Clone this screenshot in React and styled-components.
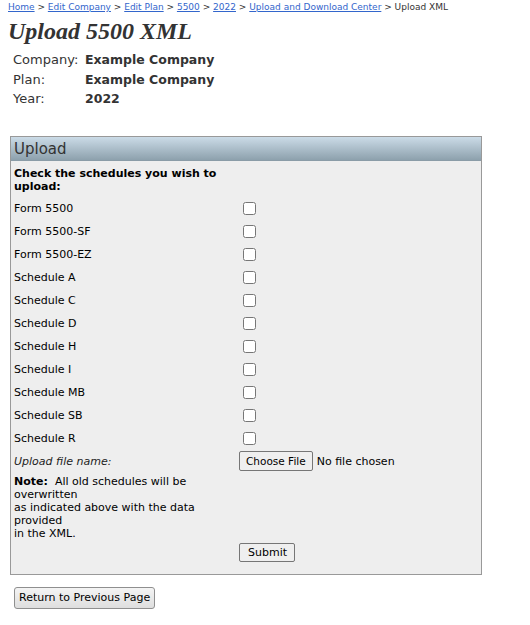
import React from "react";
import styled, { createGlobalStyle } from "styled-components";

const Global = createGlobalStyle`
  html, body { margin: 0; padding: 0; background: #fff; }
  body { font-family: "DejaVu Sans", Verdana, sans-serif; color: #000; }
`;

const Page = styled.div`
  width: 474px;
  padding: 0 0 0 8px;
`;

const Crumbs = styled.div`
  font-size: 9px;
  line-height: 14px;
  color: #333;
  white-space: nowrap;
`;

const Crumb = styled.a`
  color: #3366cc;
  text-decoration: underline;
`;

const Title = styled.h1`
  margin: 3px 0 0;
  font-family: "Liberation Serif", "Times New Roman", serif;
  font-style: italic;
  font-weight: bold;
  font-size: 24px;
  line-height: 28px;
  color: #333;
`;

const Info = styled.div`
  display: grid;
  grid-template-columns: 72px auto;
  grid-auto-rows: 19.5px;
  align-items: center;
  margin-top: 5px;
  padding-left: 5px;
  color: #333;
`;

const InfoLabel = styled.div`
  font-size: 13px;
`;

const InfoValue = styled.div`
  font-size: 12.5px;
  font-weight: bold;
`;

const Panel = styled.div`
  margin: 27px 0 0 2px;
  width: 470px;
  border: 1px solid #999;
  background: #eeeeee;
`;

const PanelHead = styled.div`
  height: 23px;
  line-height: 24px;
  padding-left: 3px;
  font-size: 15px;
  color: #333;
  background: linear-gradient(#cbdbe7, #8da1ad);
  border-bottom: 1px solid #8a9ca7;
`;

const Form = styled.div`
  display: grid;
  grid-template-columns: 222px 1fr;
  column-gap: 3px;
  padding: 6px 3px 12px;
  font-size: 11px;
`;

const Intro = styled.div`
  grid-column: 1;
  font-weight: bold;
  line-height: 13px;
  padding-bottom: 4px;
`;

const Cell = styled.div`
  height: 23px;
  display: flex;
  align-items: center;
  font-style: ${(p) => (p.$italic ? "italic" : "normal")};
  color: ${(p) => (p.$italic ? "#222" : "#000")};
`;

const Box = styled.input`
  width: 13px;
  height: 13px;
  margin: 3px 3px 3px 4px;
`;

const FileInput = styled.input`
  font-family: "DejaVu Sans", Verdana, sans-serif;
  font-size: 11px;
  color: #000;
  &::file-selector-button {
    font-family: "DejaVu Sans", Verdana, sans-serif;
    font-size: 10.5px;
    height: 20px;
    padding: 0 6px;
    margin-right: 4px;
    border: 1px solid #767676;
    border-radius: 2px;
    background: #efefef;
    color: #000;
  }
`;

const Note = styled.div`
  grid-column: 1;
  line-height: 13px;
  padding: 2px 0 3px;
`;

const SubmitCell = styled.div`
  grid-column: 2;
`;

const Button = styled.button`
  font-family: "DejaVu Sans", Verdana, sans-serif;
  font-size: 11px;
  color: #000;
  height: 19px;
  padding: 0 7px 0 8px;
  border: 1px solid #767676;
  border-radius: 2px;
  background: #efefef;
`;

const ReturnButton = styled(Button)`
  margin: 12px 0 0 6px;
  height: 22px;
  font-size: 11px;
  padding: 0 4px;
  border: 1px solid #8f8f8f;
  border-radius: 3px;
  background: linear-gradient(#f4f4f4, #dedede);
`;

const schedules = [
  "Form 5500",
  "Form 5500-SF",
  "Form 5500-EZ",
  "Schedule A",
  "Schedule C",
  "Schedule D",
  "Schedule H",
  "Schedule I",
  "Schedule MB",
  "Schedule SB",
  "Schedule R",
];

const crumbs = ["Home", "Edit Company", "Edit Plan", "5500", "2022", "Upload and Download Center"];

export default function App() {
  return (
    <>
      <Global />
      <Page>
        <Crumbs>
          {crumbs.map((c) => (
            <React.Fragment key={c}>
              <Crumb href="#">{c}</Crumb>
              {" > "}
            </React.Fragment>
          ))}
          Upload XML
        </Crumbs>
        <Title>Upload 5500 XML</Title>
        <Info>
          <InfoLabel>Company:</InfoLabel>
          <InfoValue>Example Company</InfoValue>
          <InfoLabel>Plan:</InfoLabel>
          <InfoValue>Example Company</InfoValue>
          <InfoLabel>Year:</InfoLabel>
          <InfoValue>2022</InfoValue>
        </Info>
        <Panel>
          <PanelHead>Upload</PanelHead>
          <Form>
            <Intro>Check the schedules you wish to upload:</Intro>
            <div />
            {schedules.map((s) => (
              <React.Fragment key={s}>
                <Cell>{s}</Cell>
                <Cell>
                  <Box type="checkbox" />
                </Cell>
              </React.Fragment>
            ))}
            <Cell $italic>Upload file name:</Cell>
            <Cell>
              <FileInput type="file" />
            </Cell>
            <Note>
              <b>Note:</b>&nbsp; All old schedules will be overwritten
              <br />
              as indicated above with the data provided
              <br />
              in the XML.
            </Note>
            <div />
            <SubmitCell>
              <Button>Submit</Button>
            </SubmitCell>
          </Form>
        </Panel>
        <ReturnButton>Return to Previous Page</ReturnButton>
      </Page>
    </>
  );
}
